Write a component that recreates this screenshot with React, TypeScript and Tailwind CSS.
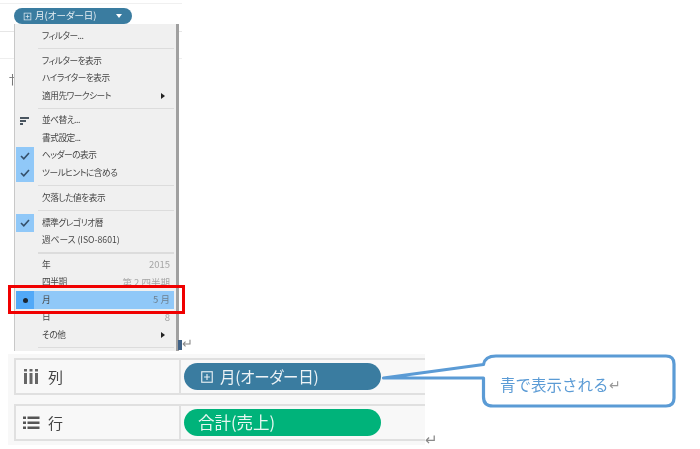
const font = { fontFamily: '"Noto Sans CJK JP", "Noto Sans", sans-serif' };

type Row = {
  label?: string;
  sep?: boolean;
  icon?: "check" | "sort" | "dot";
  right?: string;
  arrow?: boolean;
  active?: boolean;
  latin?: boolean;
};

const rows: Row[] = [
  { label: "フィルター..." },
  { sep: true },
  { label: "フィルターを表示" },
  { label: "ハイライターを表示" },
  { label: "適用先ワークシート", arrow: true },
  { sep: true },
  { label: "並べ替え...", icon: "sort" },
  { label: "書式設定..." },
  { label: "ヘッダーの表示", icon: "check" },
  { label: "ツールヒントに含める", icon: "check" },
  { sep: true },
  { label: "欠落した値を表示" },
  { sep: true },
  { label: "標準グレゴリオ暦", icon: "check" },
  { label: "週ベース (ISO-8601)", latin: true },
  { sep: true },
  { label: "年", right: "2015" },
  { label: "四半期", right: "第 2 四半期" },
  { label: "月", right: "5 月", icon: "dot", active: true },
  { label: "日", right: "8" },
  { label: "その他", arrow: true },
  { sep: true },
];

function PlusBox({ size, color }: { size: number; color: string }) {
  return (
    <svg width={size} height={size} viewBox="0 0 12 12" fill="none" stroke={color} strokeWidth="1">
      <rect x="1.5" y="1.5" width="9" height="9" />
      <path d="M3.5 6h5M6 3.5v5" />
    </svg>
  );
}

function RowIcon({ icon }: { icon?: Row["icon"] }) {
  if (icon === "check")
    return (
      <svg width="10" height="8" viewBox="0 0 10 8" fill="none" stroke="#35506b" strokeWidth="1.6">
        <path d="M1 4l2.8 2.8L9 1" />
      </svg>
    );
  if (icon === "sort")
    return (
      <svg width="10" height="8" viewBox="0 0 10 8" fill="#4a5560">
        <rect x="0" y="0" width="9" height="2" />
        <rect x="0" y="3" width="6" height="2" />
        <rect x="0" y="6" width="3" height="2" />
      </svg>
    );
  if (icon === "dot") return <span className="h-[5px] w-[5px] rounded-full bg-[#1c2733]" />;
  return null;
}

function MenuRow({ row }: { row: Row }) {
  if (row.sep)
    return (
      <div className="flex h-[7.3px] items-center pl-[22px]">
        <div className="h-[1.5px] w-full bg-[#dcdcdc]" />
      </div>
    );
  const iconBg =
    row.icon === "check" ? "bg-[#90c8f8]" : row.icon === "dot" ? "bg-[#52a9f8]" : "";
  return (
    <div className={`flex h-[17.5px] items-center ${row.active ? "bg-[#90c8f8]" : ""}`}>
      <div className={`flex h-full w-[18px] shrink-0 items-center justify-center ${iconBg}`}>
        <RowIcon icon={row.icon} />
      </div>
      <span
        className={`ml-[8px] flex-1 whitespace-nowrap text-[8.7px] leading-none text-[#474747] [font-feature-settings:'palt'] ${
          row.latin ? "" : "tracking-[-0.5px]"
        }`}
      >
        {row.label}
      </span>
      {row.right && (
        <span
          className={`mr-[4px] whitespace-nowrap text-[9.5px] leading-none [font-feature-settings:'palt'] ${
            row.active ? "text-[#6d7f8e]" : "text-[#a5a5a5]"
          }`}
        >
          {row.right}
        </span>
      )}
      {row.arrow && <span className="mr-[9px] h-0 w-0 border-y-[3px] border-l-[4px] border-y-transparent border-l-[#222]" />}
    </div>
  );
}

function ShelfRow({ children, label, icon }: { children: React.ReactNode; label: string; icon: React.ReactNode }) {
  return (
    <div className="flex h-[37px] border-2 border-r-0 border-[#e0e0e0]">
      <div className="flex w-[165px] shrink-0 items-center border-r-2 border-[#e0e0e0] pl-[7px]">
        <span className="flex w-[25px] items-center">{icon}</span>
        <span className="text-[15px] leading-none text-[#444]">{label}</span>
      </div>
      <div className="flex flex-1 items-center pl-[3px]">{children}</div>
    </div>
  );
}

export default function App() {
  return (
    <div className="relative h-[449px] w-[700px] overflow-hidden bg-white blur-[0.35px]" style={font}>
      {/* top: worksheet background, pill and menu */}
      <div className="relative h-[350px]">
        <div className="absolute left-0 top-[3px] h-px w-[182px] bg-[#f0f0f0]" />
        <div className="absolute left-0 top-[31px] h-px w-[182px] bg-[#e6e6e6]" />
        <div className="absolute left-0 top-[58px] h-px w-[182px] bg-[#eeeeee]" />
        <span className="absolute left-[6px] top-[72px] text-[13px] leading-none text-[#777]">†</span>

        <div className="relative pl-[14px] pt-[8px]">
          <div className="relative z-10 flex h-[16px] w-[118px] items-center rounded-full bg-[#3a7ca0] pl-[9px] pr-[10px]">
            <PlusBox size={9} color="#dbe7ee" />
            <span className="ml-[3px] flex-1 text-[9.5px] leading-none text-[#e9f0f4] [font-feature-settings:'palt']">月(オーダー日)</span>
            <span className="h-0 w-0 border-x-[3.5px] border-t-[4px] border-x-transparent border-t-white" />
          </div>
          <div className="relative w-[165px] border-l border-[#c8c8c8] border-r-[3px] border-r-[#a0a0a0] bg-[#f0f0f0] pl-px pr-[2px] pt-[3.5px]">
            {rows.map((r, i) => (
              <MenuRow key={i} row={r} />
            ))}
          </div>
        </div>

        {/* red highlight frame */}
        <div className="absolute left-[8px] top-[284.5px] h-[29.5px] w-[177px] border-[3px] border-[#f00000]" />
        {/* return mark beside menu */}
        <div className="absolute left-[178px] top-[340px] h-[10px] w-[4px] bg-[#3f6186]" />
        <span className="absolute left-[182px] top-[336px] text-[13px] leading-none text-[#8a8a8a]">↵</span>
      </div>

      {/* bottom: shelves */}
      <div className="ml-[8px] mt-[4px] flex h-[91px] w-[417px] flex-col gap-[9px] bg-[#f8f8f8] pl-[6px] pt-[4px]">
        <ShelfRow
          label="列"
          icon={
            <svg width="16" height="15" viewBox="0 0 16 15" fill="#666">
              <rect x="1" y="4" width="3" height="11" />
              <rect x="1" y="0" width="3" height="2.5" />
              <rect x="6.5" y="4" width="3" height="11" />
              <rect x="6.5" y="0" width="3" height="2.5" />
              <rect x="12" y="4" width="3" height="11" />
              <rect x="12" y="0" width="3" height="2.5" />
            </svg>
          }
        >
          <div className="flex h-[27px] w-[197px] items-center rounded-full bg-[#3a7ca0] pl-[16px]">
            <PlusBox size={14} color="#e3edf2" />
            <span className="ml-[6px] text-[15.5px] leading-none tracking-[-0.25px] text-[#edf3f6] [font-feature-settings:'palt']">月(オーダー日)</span>
          </div>
        </ShelfRow>
        <ShelfRow
          label="行"
          icon={
            <svg width="17" height="14" viewBox="0 0 17 14" fill="#555">
              <rect x="0" y="0.5" width="3" height="2.5" />
              <rect x="4.5" y="0.5" width="12" height="2.5" />
              <rect x="0" y="5.5" width="3" height="2.5" />
              <rect x="4.5" y="5.5" width="12" height="2.5" />
              <rect x="0" y="10.5" width="3" height="2.5" />
              <rect x="4.5" y="10.5" width="12" height="2.5" />
            </svg>
          }
        >
          <div className="flex h-[27px] w-[197px] items-center rounded-full bg-[#00b37a] pl-[14px]">
            <span className="text-[16.5px] leading-none text-[#e6f7f1]">合計(売上)</span>
          </div>
        </ShelfRow>
      </div>
      <span className="absolute left-[425px] top-[431px] text-[15px] leading-none text-[#8a8a8a]">↵</span>

      {/* callout over the picture */}
      <svg className="absolute left-[380px] top-[350px]" width="300" height="62" viewBox="0 0 300 62" fill="none">
        <path
          d="M3.5 28 L103.5 14.5 Q105 6 116 6 L286 6 Q294 6 294 14 L294 48 Q294 56 286 56 L113 56 Q103.5 56 103.5 47 L103.5 28 Z"
          fill="white"
          stroke="#5b9bd5"
          strokeWidth="3.2"
          strokeLinejoin="round"
        />
      </svg>
      <div className="absolute left-[500px] top-[373.5px] flex items-center">
        <span className="text-[15.5px] leading-[20px] text-[#5b9bd5]">青で表示される</span>
        <span className="text-[14px] leading-none text-[#999]">↵</span>
      </div>
    </div>
  );
}
